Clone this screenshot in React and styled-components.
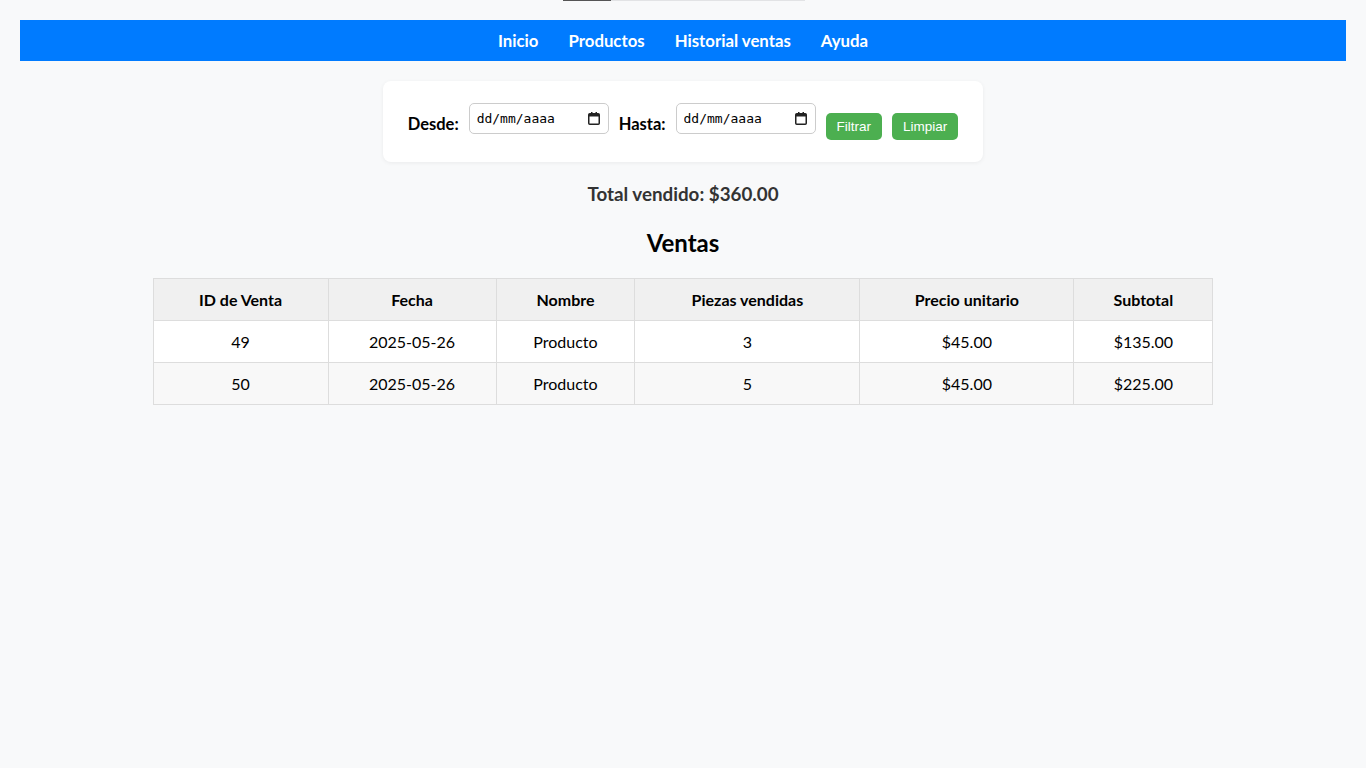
import React from "react";
import styled, { createGlobalStyle } from "styled-components";

const GlobalStyle = createGlobalStyle`
  html, body { margin: 0; padding: 0; background: #f8f9fa; }
  body { font-family: "Lato", "Open Sans", sans-serif; color: #000; }
  * { box-sizing: border-box; }
`;

const Page = styled.div`
  position: relative;
  padding: 20px;
  min-height: 768px;
`;

const TopProgress = styled.div`
  position: absolute;
  top: 0;
  left: 563px;
  width: 242px;
  height: 1px;
  background: #e2e3e5;
`;

const TopProgressFill = styled.div`
  width: 48px;
  height: 1px;
  background: #555;
`;

const Nav = styled.nav`
  background: #007bff;
  height: 41px;
  display: flex;
  justify-content: center;
  align-items: center;
`;

const NavLink = styled.a`
  color: #fff;
  font-weight: 700;
  font-size: 16.8px;
  margin: 0 15px;
  text-decoration: none;
`;

const FilterCard = styled.div`
  width: 600px;
  margin: 20px auto 0;
  background: #fff;
  border-radius: 8px;
  box-shadow: 0 1px 4px rgba(0, 0, 0, 0.06);
  padding: 22px 24px 18px;
  display: flex;
  align-items: center;
  justify-content: center;
  gap: 10px;
`;

const Label = styled.label`
  font-weight: 700;
  font-size: 16.5px;
`;

const DateBox = styled.div`
  width: 140px;
  height: 31px;
  margin-bottom: 10px;
  border: 1px solid #ccc;
  border-radius: 5px;
  background: #fff;
  display: flex;
  align-items: center;
  padding: 0 8px 0 7px;
`;

const DateText = styled.input`
  flex: 1;
  min-width: 0;
  border: none;
  outline: none;
  background: transparent;
  padding: 0;
  font-family: "DejaVu Sans Mono", "Liberation Mono", monospace;
  font-size: 13px;
  color: #000;
  &::placeholder { color: #000; }
`;

const GreenButton = styled.button`
  height: 27px;
  margin-top: 6px;
  padding: 0 11px;
  border: none;
  border-radius: 5px;
  background: #4caf50;
  color: #fff;
  font-family: "Liberation Sans", Arial, sans-serif;
  font-size: 13.5px;
  cursor: pointer;
`;

const Total = styled.p`
  margin: 20px 0 0;
  text-align: center;
  font-size: 18.8px;
  font-weight: 700;
  color: #333;
  line-height: 24px;
`;

const Heading = styled.h2`
  margin: 21px 0 19px;
  text-align: center;
  font-size: 24px;
  font-weight: 700;
  line-height: 32px;
`;

const Table = styled.table`
  width: 80%;
  margin: 0 auto;
  border-collapse: collapse;
  background: #fff;
  font-size: 16px;
`;

const Th = styled.th`
  border: 1px solid #ddd;
  background: #f0f0f0;
  padding: 10px;
  height: 42px;
  font-weight: 700;
  text-align: center;
  line-height: 21px;
`;

const Td = styled.td`
  border: 1px solid #ddd;
  padding: 10px;
  height: 42px;
  text-align: center;
  line-height: 21px;
`;

const Tr = styled.tr`
  background: ${(p) => (p.$alt ? "#f8f8f8" : "#fff")};
`;

const CalendarIcon = () => (
  <svg width="12" height="13" viewBox="0 0 12 13" fill="none">
    <rect x="3" y="0" width="1.5" height="2.5" fill="#222" />
    <rect x="7.5" y="0" width="1.5" height="2.5" fill="#222" />
    <rect x="0.75" y="1.75" width="10.5" height="10.5" rx="1" stroke="#222" strokeWidth="1.5" />
    <rect x="1" y="2" width="10" height="2.5" fill="#222" />
  </svg>
);

const DateField = () => (
  <DateBox>
    <DateText type="text" placeholder="dd/mm/aaaa" />
    <CalendarIcon />
  </DateBox>
);

const columns = [
  { label: "ID de Venta", w: 175 },
  { label: "Fecha", w: 168 },
  { label: "Nombre", w: 139 },
  { label: "Piezas vendidas", w: 225 },
  { label: "Precio unitario", w: 214 },
  { label: "Subtotal", w: 139 },
];

const rows = [
  ["49", "2025-05-26", "Producto", "3", "$45.00", "$135.00"],
  ["50", "2025-05-26", "Producto", "5", "$45.00", "$225.00"],
];

export default function App() {
  return (
    <>
      <GlobalStyle />
      <Page>
        <TopProgress>
          <TopProgressFill />
        </TopProgress>
        <Nav>
          <NavLink href="#">Inicio</NavLink>
          <NavLink href="#">Productos</NavLink>
          <NavLink href="#">Historial ventas</NavLink>
          <NavLink href="#">Ayuda</NavLink>
        </Nav>
        <FilterCard>
          <Label>Desde:</Label>
          <DateField />
          <Label>Hasta:</Label>
          <DateField />
          <GreenButton>Filtrar</GreenButton>
          <GreenButton>Limpiar</GreenButton>
        </FilterCard>
        <Total>Total vendido: $360.00</Total>
        <Heading>Ventas</Heading>
        <Table>
          <colgroup>
            {columns.map((c) => (
              <col key={c.label} style={{ width: `${c.w}px` }} />
            ))}
          </colgroup>
          <thead>
            <tr>
              {columns.map((c) => (
                <Th key={c.label}>{c.label}</Th>
              ))}
            </tr>
          </thead>
          <tbody>
            {rows.map((r, i) => (
              <Tr key={r[0]} $alt={i % 2 === 1}>
                {r.map((v, j) => (
                  <Td key={j}>{v}</Td>
                ))}
              </Tr>
            ))}
          </tbody>
        </Table>
      </Page>
    </>
  );
}
